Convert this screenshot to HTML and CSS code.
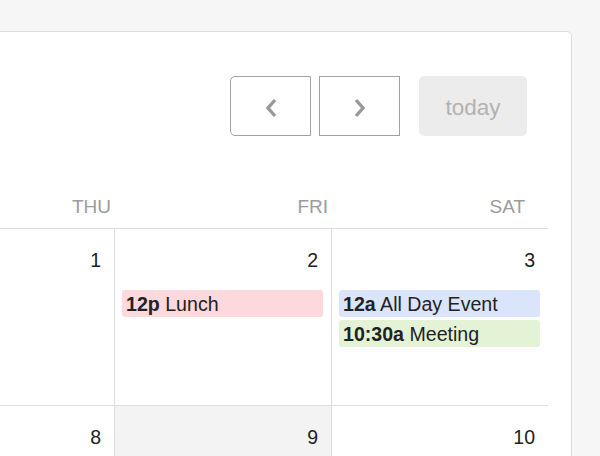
FILE: index.html
```html
<!DOCTYPE html>
<html lang="en">
<head>
<meta charset="utf-8">
<title>Calendar</title>
<link rel="stylesheet" href="styles.css">
</head>
<body>
<div class="card">
  <div class="toolbar">
    <div class="btn-group">
      <button class="btn btn-prev" aria-label="prev">
        <svg class="chev" width="16" height="22" viewBox="0 0 16 22"><path d="M12 3 L5 11 L12 19" fill="none" stroke="#999" stroke-width="3.4"/></svg>
      </button>
      <button class="btn btn-next" aria-label="next">
        <svg class="chev" width="16" height="22" viewBox="0 0 16 22"><path d="M4 3 L11 11 L4 19" fill="none" stroke="#999" stroke-width="3.4"/></svg>
      </button>
    </div>
    <button class="btn-today">today</button>
  </div>

  <div class="grid head">
    <div class="dow">THU</div>
    <div class="dow">FRI</div>
    <div class="dow dow-last">SAT</div>
  </div>

  <div class="grid week">
    <div class="day">
      <div class="num">1</div>
    </div>
    <div class="day">
      <div class="num">2</div>
      <div class="events">
        <div class="ev ev-pink"><b>12p</b> Lunch</div>
      </div>
    </div>
    <div class="day">
      <div class="num">3</div>
      <div class="events">
        <div class="ev ev-blue"><b>12a</b> All Day Event</div>
        <div class="ev ev-green"><b>10:30a</b> Meeting</div>
      </div>
    </div>
  </div>

  <div class="grid week">
    <div class="day">
      <div class="num">8</div>
    </div>
    <div class="day today">
      <div class="num">9</div>
    </div>
    <div class="day">
      <div class="num">10</div>
    </div>
  </div>
</div>
</body>
</html>
```

FILE: styles.css
```css
html, body {
  margin: 0;
  padding: 0;
  height: 100%;
  overflow: hidden;
}

body {
  background: #f6f6f6;
  font-family: "Liberation Sans", Arial, Helvetica, sans-serif;
  color: #222;
}

.card {
  box-sizing: border-box;
  width: 612px;
  height: 520px;
  margin: 31px 0 0 -40px;
  padding: 44px 23px 0 0;
  background: #fff;
  border: 1px solid #dcdcdc;
  border-radius: 5px;
}

.toolbar {
  display: flex;
  justify-content: flex-end;
  align-items: center;
  gap: 19px;
  padding-right: 21px;
  height: 60px;
}

.btn-group {
  display: flex;
  gap: 8px;
}

.btn {
  box-sizing: border-box;
  width: 81px;
  height: 60px;
  padding: 3px 0 0;
  margin: 0;
  background: #fff;
  border: 1px solid #a2a2a2;
  border-radius: 0;
  display: flex;
  align-items: center;
  justify-content: center;
}

.btn-prev {
  border-radius: 5px 0 0 5px;
}

.btn-today {
  box-sizing: border-box;
  width: 108px;
  height: 60px;
  margin: 0;
  padding: 3px 0 0;
  border: 0;
  border-radius: 5px;
  background: #ececec;
  color: #b2b2b2;
  font-family: inherit;
  font-size: 22.5px;
}

.grid {
  display: grid;
  grid-template-columns: 1fr 217px 217px;
}

.head {
  margin-top: 60px;
  border-bottom: 1px solid #dddddd;
}

.dow {
  font-size: 19px;
  line-height: 22px;
  color: #9b9b9b;
  text-align: right;
  padding: 0 3px 10px 0;
}

.dow-last {
  padding-right: 23px;
}

.week {
  height: 176px;
  border-bottom: 1px solid #dddddd;
}

.day + .day {
  border-left: 1px solid #dddddd;
}

.day.today {
  background: #f3f3f3;
}

.num {
  font-size: 19.5px;
  line-height: 22px;
  color: #222;
  text-align: right;
  padding: 20px 13px 0 0;
}

.events {
  margin: 19px 8px 0 7px;
  display: flex;
  flex-direction: column;
  gap: 3px;
}

.ev {
  height: 27px;
  line-height: 28px;
  font-size: 19.6px;
  padding: 0 4px;
  border-radius: 3px;
  white-space: nowrap;
  overflow: hidden;
  color: #222;
}

.ev b {
  font-weight: bold;
}

.ev-pink {
  background: #fdd8dc;
}

.ev-blue {
  background: #dae5fb;
}

.ev-green {
  background: #e4f3d6;
}
```
